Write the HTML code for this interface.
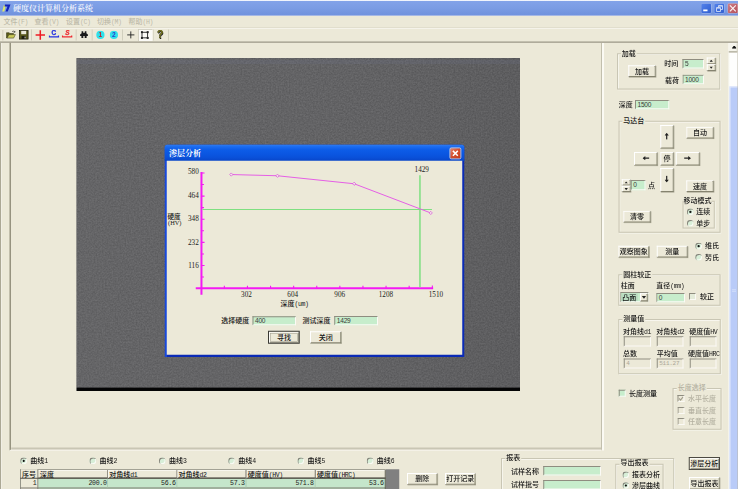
<!DOCTYPE html>
<html lang="zh-CN">
<head>
<meta charset="utf-8">
<title>硬度仪计算机分析系统</title>
<style>
*{box-sizing:border-box;margin:0;padding:0}
html,body{width:738px;height:489px;overflow:hidden;background:#ece9d8}
body{position:relative;font-family:"Liberation Sans","Noto Sans CJK SC",sans-serif;font-size:7px;line-height:8px;color:#161616;font-weight:500}
.a{position:absolute;white-space:nowrap}
.t{position:absolute;white-space:nowrap;height:8px;line-height:8px}
.btn{position:absolute;background:#ece9d8;border-top:1px solid #fff;border-left:1px solid #fff;border-right:1.2px solid #85836f;border-bottom:1.2px solid #85836f;box-shadow:0.6px 0.6px 0 #aaa794;text-align:center;white-space:nowrap;display:flex;align-items:center;justify-content:center}
.inp{position:absolute;background:#c7edcc;border-top:1px solid #8f8d80;border-left:1px solid #8f8d80;border-right:1px solid #fbfaf5;border-bottom:1px solid #fbfaf5;white-space:nowrap;padding-left:1.5px;display:flex;align-items:center;color:#3a3a3a;font-size:6.6px;letter-spacing:-0.25px}
.inp.ro{background:#ece9d8;color:#aca899}
.grp{position:absolute;border:1px solid #c9c6b4;box-shadow:0.7px 0.7px 0 #fbfaf5, inset 0.7px 0.7px 0 #fbfaf5}
.gl{position:absolute;background:#ece9d8;padding:0 1px;white-space:nowrap;height:8px;line-height:8px}
.rad{position:absolute;width:6.6px;height:6.6px;border-radius:3.3px;background:#d8efd8;box-shadow:inset 0.9px 0.9px 0 #85837a,inset -0.9px -0.9px 0 #fbfaf5}
.rad.on::after{content:"";position:absolute;left:2.2px;top:2.2px;width:2.2px;height:2.2px;border-radius:1.1px;background:#111}
.chk{position:absolute;width:7px;height:7px;background:#c7edcc;border-top:1px solid #8f8d80;border-left:1px solid #8f8d80;border-right:1px solid #fbfaf5;border-bottom:1px solid #fbfaf5}
.dis{color:#b3b0a0}
.sm{font-family:"Liberation Mono",monospace;font-size:6.5px;letter-spacing:-0.42px}
.mono{font-family:"Liberation Mono",monospace;font-size:6.6px;letter-spacing:-0.36px;color:#1c1c1c}
</style>
</head>
<body>
<div id="layer" style="position:absolute;left:0;top:0;width:738px;height:489px;overflow:hidden;filter:blur(0.35px)">
<div id="app" style="position:absolute;left:0;top:0;width:738px;height:489px;zoom:4;transform:scale(0.25);transform-origin:0 0">
<!-- title bar -->
<div class="a" id="title" style="left:0;top:0;width:738px;height:16px;background:linear-gradient(#f4f7fd 0,#eef2fb 0.8px,#82a2e8 1.4px,#7b9ce4 8px,#7395df 13px,#7193de 14.8px,#9fb3e6 15.4px,#c9d0dd 16px)"></div>
<div class="a" style="left:13px;top:3.5px;font-size:8px;line-height:9px;font-weight:600;color:#f3f6fd;font-family:'Liberation Serif','Noto Serif CJK SC',serif">硬度仪计算机分析系统</div>
<svg class="a" style="left:2px;top:4px" width="9.2" height="8" viewBox="0 0 8 8" preserveAspectRatio="none"><path d="M1.6 1.2H3.4L2 7.4H0.2Z" fill="#dfe86a"/><path d="M2.6 0.6H7.4L5 7.6H3L4.8 2.4H2.2Z" fill="#1122b8"/></svg>
<!-- window buttons -->
<div class="a" style="left:701px;top:3.2px;width:10.4px;height:10.2px;border-radius:1.5px;background:linear-gradient(135deg,#5583ea,#3f6ddc 55%,#3360cf);border:0.6px solid rgba(255,255,255,0.4)"></div>
<div class="a" style="left:703.2px;top:9.6px;width:4.2px;height:1.7px;background:#fff"></div>
<div class="a" style="left:714px;top:3.2px;width:10.4px;height:10.2px;border-radius:1.5px;background:linear-gradient(135deg,#5583ea,#3f6ddc 55%,#3360cf);border:0.6px solid rgba(255,255,255,0.4)"></div>
<div class="a" style="left:718.2px;top:5.3px;width:4.6px;height:4.4px;border:0.8px solid #eef2fc;border-top-width:1.3px"></div>
<div class="a" style="left:716.2px;top:7.3px;width:4.6px;height:4.4px;border:0.8px solid #eef2fc;border-top-width:1.3px;background:#3f6ddc"></div>
<div class="a" style="left:727.4px;top:3.2px;width:10.6px;height:10.2px;border-radius:1.5px;background:linear-gradient(135deg,#cf7f88,#c0636c 55%,#b5545e);border:0.6px solid rgba(255,255,255,0.4)"></div>
<svg class="a" style="left:727.4px;top:3.2px" width="10.6" height="10.2" viewBox="0 0 10.6 10.2"><path d="M2.4 2.2L8.3 8.1M8.3 2.2L2.4 8.1" stroke="#fbf3f4" stroke-width="1.15"/></svg>

<!-- menu -->
<div class="a" id="menu" style="left:0;top:16px;width:738px;height:12px;background:#ece9d8"></div>
<div class="t" style="left:3.5px;top:18px;color:#bdbaa9">文件<span class="sm">(F)</span></div>
<div class="t" style="left:34.5px;top:18px;color:#bdbaa9">查看<span class="sm">(V)</span></div>
<div class="t" style="left:66px;top:18px;color:#bdbaa9">设置<span class="sm">(C)</span></div>
<div class="t" style="left:97px;top:18px;color:#bdbaa9">切换<span class="sm">(M)</span></div>
<div class="t" style="left:128.5px;top:18px;color:#bdbaa9">帮助<span class="sm">(H)</span></div>

<!-- toolbar -->
<div class="a" style="left:0;top:27.5px;width:738px;height:1px;background:#d6d3c2"></div>
<div class="a" style="left:0;top:28.3px;width:738px;height:0.8px;background:#fbfaf5"></div>
<div id="toolbar">
<!-- grip -->
<div class="a" style="left:2.5px;top:30px;width:0.8px;height:10.5px;background:#c9c6b4"></div>
<!-- open folder -->
<svg class="a" style="left:6px;top:29.5px" width="10" height="10" viewBox="0 0 10 10"><path d="M0.5 8.5V3.2H3.2L4 4H7.5V5H3L1.2 8.5Z" fill="#5a5a18" stroke="#2a2a0a" stroke-width="0.5"/><path d="M1 8.6L2.9 5.1H9.4L7.6 8.6Z" fill="#c9c95a" stroke="#2a2a0a" stroke-width="0.5"/><path d="M6 2.4C7 1.2 8.3 1.4 8.8 2.6M8.9 1.4V2.8H7.6" stroke="#222" stroke-width="0.6" fill="none"/></svg>
<!-- save -->
<svg class="a" style="left:19px;top:30px" width="10" height="10" viewBox="0 0 10 10"><rect x="0.5" y="0.5" width="8.6" height="8.6" fill="#55551a" stroke="#15150a" stroke-width="0.7"/><rect x="2.2" y="0.9" width="5" height="3.3" fill="#e9e7d8"/><rect x="2.6" y="6" width="4.4" height="3" fill="#1c1c10"/><rect x="5.6" y="6.6" width="1" height="1.8" fill="#d8d6c4"/></svg>
<div class="a" style="left:31.3px;top:29.5px;width:0.8px;height:11px;background:#c9c6b4"></div>
<!-- red plus -->
<svg class="a" style="left:35px;top:29.5px" width="11" height="11" viewBox="0 0 11 11"><path d="M5.3 0.8V10.2M0.6 5.4H10" stroke="#ee1c24" stroke-width="1.5"/></svg>
<!-- C -->
<svg class="a" style="left:48.5px;top:30px" width="11" height="10" viewBox="0 0 11 10"><path d="M0.7 5.4V6.9H10V5.4" stroke="#2430e0" stroke-width="1.3" fill="none"/><text x="3.1" y="4.9" font-family="Liberation Sans,sans-serif" font-weight="bold" font-size="6.4" fill="#2430e0" stroke="#2430e0" stroke-width="0.3">C</text></svg>
<!-- S -->
<svg class="a" style="left:61.8px;top:30px" width="11" height="10" viewBox="0 0 11 10"><path d="M0.7 5.4V6.9H10V5.4" stroke="#ee2a30" stroke-width="1.3" fill="none"/><text x="3.4" y="4.9" font-family="Liberation Sans,sans-serif" font-weight="bold" font-style="italic" font-size="6.4" fill="#ee2a30" stroke="#ee2a30" stroke-width="0.3">S</text></svg>
<div class="a" style="left:75.8px;top:29.5px;width:0.8px;height:11px;background:#c9c6b4"></div>
<!-- binoculars -->
<svg class="a" style="left:80px;top:31px" width="8" height="7.4" viewBox="0 0 8 7.4"><path d="M1.6 0.3H3.2V1.8H4.8V0.3H6.4V2.2L7.9 3.6V4.9H6.6V7H4.7V4.9H3.3V7H1.4V4.9H0.1V3.6L1.6 2.2Z" fill="#1a1a1a"/></svg>
<div class="a" style="left:91.8px;top:29.5px;width:0.8px;height:11px;background:#c9c6b4"></div>
<!-- circle 1 -->
<svg class="a" style="left:96px;top:30.4px" width="9" height="9" viewBox="0 0 9 9"><circle cx="4.4" cy="4.4" r="4.1" fill="#2fe0ea"/><text x="2.6" y="6.7" font-family="Liberation Sans,sans-serif" font-weight="bold" font-size="6.6" fill="#c0232f">1</text></svg>
<!-- circle 2 -->
<svg class="a" style="left:109.6px;top:30.4px" width="9" height="9" viewBox="0 0 9 9"><circle cx="4.4" cy="4.4" r="4.1" fill="#2fe0ea"/><text x="2.5" y="6.7" font-family="Liberation Sans,sans-serif" font-weight="bold" font-size="6.6" fill="#2a3ad0">2</text></svg>
<div class="a" style="left:122.2px;top:29.5px;width:0.8px;height:11px;background:#c9c6b4"></div>
<!-- black plus -->
<svg class="a" style="left:127px;top:31px" width="8" height="8" viewBox="0 0 8 8"><path d="M3.8 0.4V7.4M0.2 3.9H7.4" stroke="#222" stroke-width="0.9"/></svg>
<!-- pressed rect-select -->
<div class="a" style="left:138.3px;top:29px;width:14.2px;height:12px;background:#fbfaf6;border-top:0.8px solid #c9c6b4;border-left:0.8px solid #c9c6b4"></div>
<svg class="a" style="left:140.4px;top:30.8px" width="9" height="9" viewBox="0 0 9 9"><rect x="1.5" y="1.5" width="5.6" height="5.6" fill="none" stroke="#222" stroke-width="0.9"/><rect x="0.4" y="0.4" width="2" height="2" fill="#222"/><rect x="6.2" y="0.4" width="2" height="2" fill="#222"/><rect x="0.4" y="6.2" width="2" height="2" fill="#222"/><rect x="6.2" y="6.2" width="2" height="2" fill="#222"/></svg>
<div class="a" style="left:153.3px;top:29.5px;width:0.8px;height:11px;background:#d3d0bf"></div>
<!-- help -->
<div class="a" style="left:157px;top:29.2px;font-size:10.5px;line-height:11px;height:11px;font-weight:bold;color:#77761c;text-shadow:0.4px 0.4px 0 #222,-0.3px 0 0 #222">?</div>
<div class="a" style="left:168px;top:29.5px;width:0.8px;height:11px;background:#c9c6b4"></div>
</div>

<div class="a" style="left:0;top:41.5px;width:738px;height:1.3px;background:#9a9786"></div>
<!-- left strips -->
<div class="a" style="left:0;top:43px;width:1.3px;height:446px;background:#aba895"></div>
<div class="a" style="left:1.3px;top:43px;width:0.8px;height:446px;background:#f8f7ef"></div>

<!-- main panel -->
<div class="a" id="mainpanel" style="left:9.6px;top:42.8px;width:591.4px;height:407.6px;border-left:1.7px solid #96937f;border-bottom:1px solid #fbfaf5"></div>
<div class="a" style="left:11.3px;top:447.5px;width:590.8px;height:1.9px;background:#c9c6b4"></div>
<div class="a" style="left:600.9px;top:43px;width:1.2px;height:406.4px;background:#c2bfad"></div>
<div class="a" style="left:602.1px;top:43px;width:1.9px;height:407.4px;background:#fbfaf3"></div>

<div id="image">
<svg class="a" style="left:76.5px;top:58px" width="443.5" height="333" viewBox="0 0 443.5 333">
<defs>
<filter id="nz" x="0" y="0" width="100%" height="100%" color-interpolation-filters="sRGB"><feTurbulence type="fractalNoise" baseFrequency="0.62" numOctaves="2" seed="11"/><feColorMatrix type="matrix" values="0.12 0 0 0 0.318  0.12 0 0 0 0.318  0.12 0 0 0 0.326  0 0 0 0 1"/></filter>
<linearGradient id="ig" x1="0" x2="1" y1="0" y2="0"><stop offset="0" stop-color="#fff" stop-opacity="0.03"/><stop offset="0.45" stop-color="#fff" stop-opacity="0.02"/><stop offset="1" stop-color="#000" stop-opacity="0.04"/></linearGradient>
</defs>
<rect width="443.5" height="333" fill="#626264"/>
<rect width="443.5" height="333" fill="#626264" filter="url(#nz)"/>
<rect width="443.5" height="333" fill="url(#ig)"/>
<rect y="2" width="443.5" height="4" fill="#70758a" opacity="0.2"/>
<rect y="329.6" width="443.5" height="3.4" fill="#050505"/>
</svg>
</div>
<div id="dialog">
<!-- frame -->
<div class="a" style="left:164.7px;top:144.7px;width:299.6px;height:212.3px;background:linear-gradient(90deg,#1848da 0,#1848da 2.2px,#0b2bb6 2.3px,#0b2bb6 100%);border-radius:2.5px 2.5px 0 0"></div>
<div class="a" style="left:164.7px;top:144.7px;width:299.6px;height:16.3px;border-radius:2.5px 2.5px 0 0;background:linear-gradient(#2f7cf0 0,#1a6bf0 2px,#0d5de8 5px,#0a55e0 10px,#0a50d8 13px,#0844c8 16.3px)"></div>
<div class="a" style="left:166.8px;top:160.8px;width:295.5px;height:194px;background:#ece9d8"></div>
<div class="a" style="left:169px;top:149px;font-size:8px;line-height:9px;font-weight:bold;color:#fff;font-family:'Liberation Serif','Noto Serif CJK SC',serif">渗层分析</div>
<!-- close -->
<div class="a" style="left:449.6px;top:147.5px;width:11.7px;height:11.7px;border-radius:1.8px;background:linear-gradient(135deg,#e68a72,#d6502f 45%,#c23c1c);border:0.8px solid #f2e3dc"></div>
<svg class="a" style="left:449.6px;top:147.5px" width="11.7" height="11.7" viewBox="0 0 11.7 11.7"><path d="M3.4 3.4L8.3 8.3M8.3 3.4L3.4 8.3" stroke="#fff" stroke-width="1.5"/></svg>
<!-- chart -->
<svg class="a" style="left:166.8px;top:160.8px" width="295.5" height="194" viewBox="166.8 160.8 295.5 194">
<g stroke="#f41af4" fill="none">
<path d="M201.5 172V294.8" stroke-width="2"/>
<path d="M195.8 288.3H433.2" stroke-width="2"/>
<path d="M201 173H204.6M201 184.5H204M201 196.2H204.6M201 207.7H204M201 219.3H204.6M201 230.8H204M201 242.4H204.6M201 254H204M201 265.5H204.6M201 277.1H204" stroke-width="1.1"/>
<path d="M224.4 289V285.8M247.5 289V285.8M270.6 289V285.8M293.7 289V285.8M316.8 289V285.8M339.9 289V285.8M363 289V285.8M386.1 289V285.8M409.2 289V285.8M432.4 289V285.5" stroke-width="1.1"/>
</g>
<path d="M202.5 209.5H432" stroke="#7fe081" stroke-width="1.1" fill="none"/>
<path d="M420 175.3V287.4" stroke="#7fe081" stroke-width="1.5" fill="none"/>
<path d="M231.3 174.6L277.5 175.8L354.2 183.8L430.8 213" stroke="#e55fe5" stroke-width="1" fill="none"/>
<g fill="#f3e6ea" stroke="#d94fd9" stroke-width="0.7">
<path d="M229.7 174.6l1.6-1.6 1.6 1.6-1.6 1.6z"/><path d="M275.9 175.8l1.6-1.6 1.6 1.6-1.6 1.6z"/><path d="M352.6 183.8l1.6-1.6 1.6 1.6-1.6 1.6z"/><path d="M429.2 213l1.6-1.6 1.6 1.6-1.6 1.6z"/>
</g>
<g font-family="Liberation Serif,serif" font-size="7.2" fill="#222" text-anchor="end">
<text x="198.8" y="174">580</text><text x="198.8" y="197.9">464</text><text x="198.8" y="220.7">348</text><text x="198.8" y="244.8">232</text><text x="198.8" y="268">116</text>
</g>
<g font-family="Liberation Serif,serif" font-size="7.2" fill="#222" text-anchor="middle">
<text x="246.5" y="297.2">302</text><text x="292.8" y="297.2">604</text><text x="339.8" y="297.2">906</text><text x="386" y="297.2">1208</text><text x="436" y="297.2">1510</text><text x="421.8" y="172.2">1429</text>
</g>
</svg>
<div class="t" style="left:167.5px;top:212.5px;font-size:6.6px">硬度</div>
<div class="t" style="left:168px;top:219.2px;font-size:6.4px;font-family:'Liberation Serif',serif">(HV)</div>
<div class="t" style="left:280.5px;top:299.5px">深度<span class="sm">(um)</span></div>
<div class="t" style="left:221.3px;top:317px">选择硬度</div>
<div class="inp" style="left:252.5px;top:316.2px;width:43.5px;height:9px">400</div>
<div class="t" style="left:302.5px;top:317px">测试深度</div>
<div class="inp" style="left:334.3px;top:316px;width:43.8px;height:9.2px">1429</div>
<div class="btn" style="left:268px;top:330.8px;width:31.8px;height:13px;border:1px solid #3a3a34;box-shadow:inset 0.8px 0.8px 0 #fff,inset -0.8px -0.8px 0 #8a8878">寻找</div>
<div class="a" style="left:270.3px;top:333px;width:27.2px;height:8.6px;border:0.5px solid #9a9888"></div>
<div class="btn" style="left:310px;top:331.3px;width:31.3px;height:12px">关闭</div>
</div>
<div id="right">
<!-- scrollbar -->
<div class="a" style="left:727.5px;top:43px;width:10.5px;height:446px;background:linear-gradient(90deg,#ece9d8 0,#fbfbf6 1.8px,#fefefd 3px)"></div>
<div class="a" style="left:728.8px;top:43.2px;width:8.5px;height:9.4px;background:#f5f4ec;border-bottom:1.3px solid #a9a694;border-right:0.5px solid #c9c6b4"></div>
<svg class="a" style="left:732px;top:45.8px" width="4.4" height="3" viewBox="0 0 4.4 3"><path d="M0 3L0.6 1.6L1.6 0.3H2.8L3.8 1.6L4.4 3Z" fill="#111"/></svg>
<div class="a" style="left:729.6px;top:86.4px;width:8.4px;height:403px;background:#b9cbf8;border-left:1px solid #e3eafc;border-top:1px solid #e3eafc"></div>
<div class="a" style="left:732px;top:289.6px;width:4px;height:0.7px;background:#dfe8fc"></div><div class="a" style="left:732px;top:291.4px;width:4px;height:0.7px;background:#dfe8fc"></div>
<div class="a" style="left:737.3px;top:43px;width:0.7px;height:446px;background:#b9b6a4;opacity:0.6"></div>

<!-- 加载 group -->
<div class="grp" style="left:617px;top:53.3px;width:103.3px;height:36.2px"></div>
<div class="gl" style="left:620.8px;top:49.2px">加载</div>
<div class="btn" style="left:628.3px;top:65.3px;width:27.5px;height:11.8px">加载</div>
<div class="t" style="left:664.2px;top:60px">时间</div>
<div class="inp" style="left:682.5px;top:59px;width:21.6px;height:9.4px">5</div>
<div class="btn" style="left:706.8px;top:57.6px;width:9px;height:6.6px"></div>
<div class="btn" style="left:706.8px;top:64.3px;width:9px;height:6.6px"></div>
<svg class="a" style="left:709.6px;top:59.6px" width="3.4" height="2.4" viewBox="0 0 3.4 2.4"><path d="M0 2.3L1.7 0.2L3.4 2.3Z" fill="#222"/></svg>
<svg class="a" style="left:709.6px;top:66.6px" width="3.4" height="2.4" viewBox="0 0 3.4 2.4"><path d="M0 0.1L1.7 2.2L3.4 0.1Z" fill="#222"/></svg>
<div class="t" style="left:665px;top:76.5px">载荷</div>
<div class="inp" style="left:682.5px;top:74.7px;width:21.6px;height:9.5px">1000</div>

<div class="t" style="left:618.8px;top:101px">深度</div>
<div class="inp" style="left:635px;top:100px;width:34.2px;height:9.2px">1500</div>

<!-- 马达台 group -->
<div class="grp" style="left:618.5px;top:120.8px;width:102px;height:112px"></div>
<div class="gl" style="left:622.3px;top:116.8px">马达台</div>
<div class="btn" style="left:660.3px;top:125px;width:13.5px;height:23.4px"></div>
<svg class="a" style="left:664.6px;top:132.8px" width="4.4" height="7" viewBox="0 0 4.4 7"><path d="M2.2 0L4.3 2.8H2.8V6.8H1.6V2.8H0.1Z" fill="#222"/></svg>
<div class="btn" style="left:686.3px;top:126.7px;width:27.5px;height:11.7px">自动</div>
<div class="btn" style="left:634px;top:152px;width:23.6px;height:13.4px"></div>
<svg class="a" style="left:642.4px;top:155.9px" width="7" height="4.4" viewBox="0 0 7 4.4"><path d="M0 2.2L2.8 0.1V1.6H6.8V2.8H2.8V4.3Z" fill="#222"/></svg>
<div class="btn" style="left:660.3px;top:152px;width:13.5px;height:13.4px">停</div>
<div class="btn" style="left:675.8px;top:152px;width:24px;height:13.4px"></div>
<svg class="a" style="left:684px;top:155.9px" width="7" height="4.4" viewBox="0 0 7 4.4"><path d="M7 2.2L4.2 0.1V1.6H0.2V2.8H4.2V4.3Z" fill="#222"/></svg>
<div class="btn" style="left:660.3px;top:168px;width:13.5px;height:24px"></div>
<svg class="a" style="left:664.6px;top:175.6px" width="4.4" height="7" viewBox="0 0 4.4 7"><path d="M2.2 7L4.3 4.2H2.8V0.2H1.6V4.2H0.1Z" fill="#222"/></svg>
<div class="btn" style="left:686.3px;top:180.3px;width:27.5px;height:11.7px">速度</div>
<div class="btn" style="left:621.7px;top:179.2px;width:9px;height:6.4px"></div>
<div class="btn" style="left:621.7px;top:185.7px;width:9px;height:6.4px"></div>
<svg class="a" style="left:624.5px;top:181.2px" width="3.4" height="2.4" viewBox="0 0 3.4 2.4"><path d="M0 2.3L1.7 0.2L3.4 2.3Z" fill="#222"/></svg>
<svg class="a" style="left:624.5px;top:188px" width="3.4" height="2.4" viewBox="0 0 3.4 2.4"><path d="M0 0.1L1.7 2.2L3.4 0.1Z" fill="#222"/></svg>
<div class="inp" style="left:630.8px;top:180px;width:14.6px;height:10.2px">0</div>
<div class="t" style="left:648px;top:181.5px">点</div>
<div class="btn" style="left:623.3px;top:210.8px;width:27.5px;height:11.8px">清零</div>
<div class="grp" style="left:682.5px;top:200.8px;width:32.3px;height:27.6px"></div>
<div class="gl" style="left:683.5px;top:196.8px;padding:0">移动模式</div>
<div class="rad on" style="left:687px;top:208.6px"></div>
<div class="t" style="left:696.3px;top:208px">连续</div>
<div class="rad" style="left:687px;top:219.9px"></div>
<div class="t" style="left:696.3px;top:219.3px">单步</div>

<div class="btn" style="left:618.3px;top:245.8px;width:31px;height:11.8px">观察图象</div>
<div class="btn" style="left:656.7px;top:245.8px;width:31px;height:11.8px">测量</div>
<div class="rad on" style="left:695.3px;top:242.8px"></div>
<div class="t" style="left:705px;top:242px">维氏</div>
<div class="rad" style="left:695.3px;top:254px"></div>
<div class="t" style="left:705px;top:253.2px">努氏</div>

<!-- 圆柱较正 -->
<div class="grp" style="left:618.3px;top:274.2px;width:102.2px;height:31.5px"></div>
<div class="gl" style="left:622.3px;top:270.2px">圆柱较正</div>
<div class="t" style="left:620.8px;top:282px">柱面</div>
<div class="t" style="left:656.3px;top:282px">直径<span class="sm">(mm)</span></div>
<div class="inp" style="left:620.3px;top:292px;width:28.5px;height:10.2px;background:#c7edcc"></div>
<div class="a" style="left:621.8px;top:293.5px;width:16px;height:7.4px;background:#b9dcc0"></div>
<div class="t" style="left:622.3px;top:293.3px">凸面</div>
<div class="btn" style="left:640px;top:293.2px;width:7.8px;height:8px"></div>
<svg class="a" style="left:641.8px;top:296px" width="4.4" height="2.9" viewBox="0 0 3.6 2.4"><path d="M0 0.1L1.8 2.2L3.6 0.1Z" fill="#222"/></svg>
<div class="inp" style="left:656.3px;top:293px;width:28.8px;height:9.2px">0</div>
<div class="chk" style="left:689px;top:293px;background:#e4ebd9"></div>
<div class="t" style="left:700px;top:293px">较正</div>

<!-- 测量值 -->
<div class="grp" style="left:618.3px;top:319px;width:102.5px;height:55.2px"></div>
<div class="gl" style="left:622.3px;top:315px">测量值</div>
<div class="t" style="left:623px;top:327.4px">对角线<span class="sm">d1</span></div>
<div class="t" style="left:656.3px;top:327.4px">对角线<span class="sm">d2</span></div>
<div class="t" style="left:689.2px;top:327.4px">硬度值<span class="sm">HV</span></div>
<div class="inp ro" style="left:623.7px;top:336.3px;width:27.2px;height:10.2px"></div>
<div class="inp ro" style="left:656.7px;top:336.3px;width:26.8px;height:10.2px"></div>
<div class="inp ro" style="left:689.7px;top:336.3px;width:26.8px;height:10.2px"></div>
<div class="t" style="left:623px;top:349.5px">总数</div>
<div class="t" style="left:656.7px;top:349.5px">平均值</div>
<div class="t" style="left:688px;top:349.5px">硬度值<span class="sm">HRC</span></div>
<div class="inp ro" style="left:623.7px;top:358.6px;width:27.2px;height:9.8px;font-family:'Liberation Mono',monospace;font-size:6px">4</div>
<div class="inp ro" style="left:656.7px;top:358.6px;width:26.8px;height:9.8px;font-family:'Liberation Mono',monospace;font-size:6px">511.27</div>
<div class="inp ro" style="left:689.7px;top:358.6px;width:26.8px;height:9.8px"></div>

<div class="chk" style="left:618.7px;top:389.7px"></div>
<div class="t" style="left:629px;top:389.2px">长度测量</div>
<div class="grp" style="left:672.5px;top:388px;width:49px;height:41.8px"></div>
<div class="gl dis" style="left:676.8px;top:384px">长度选择</div>
<div class="chk" style="left:677.5px;top:395px;background:#ece9d8"></div>
<svg class="a" style="left:678.6px;top:396.2px" width="5" height="5" viewBox="0 0 5 5"><path d="M0.6 2.2L2 3.8L4.6 0.6" stroke="#a09d8c" stroke-width="1.1" fill="none"/></svg>
<div class="t dis" style="left:688px;top:394.5px">水平长度</div>
<div class="chk" style="left:677.5px;top:407px;background:#ece9d8"></div>
<div class="t dis" style="left:688px;top:406.5px">垂直长度</div>
<div class="chk" style="left:677.5px;top:418px;background:#ece9d8"></div>
<div class="t dis" style="left:688px;top:417.6px">任意长度</div>

<div class="btn" style="left:688.7px;top:457px;width:31.3px;height:13px;border:1px solid #4c4a42;box-shadow:inset 0.8px 0.8px 0 #fff,inset -0.8px -0.8px 0 #8a8878">渗层分析</div>
<div class="btn" style="left:689px;top:477px;width:30.8px;height:12.5px">导出报表</div>
</div>
<div id="bottom">
<div class="rad on" style="left:20.3px;top:457.6px"></div><div class="t" style="left:30.3px;top:457px">曲线<span class="sm">1</span></div>
<div class="rad" style="left:89.6px;top:457.6px"></div><div class="t" style="left:99.6px;top:457px">曲线<span class="sm">2</span></div>
<div class="rad" style="left:158.9px;top:457.6px"></div><div class="t" style="left:168.9px;top:457px">曲线<span class="sm">3</span></div>
<div class="rad" style="left:228.2px;top:457.6px"></div><div class="t" style="left:238.2px;top:457px">曲线<span class="sm">4</span></div>
<div class="rad" style="left:297.5px;top:457.6px"></div><div class="t" style="left:307.5px;top:457px">曲线<span class="sm">5</span></div>
<div class="rad" style="left:366.8px;top:457.6px"></div><div class="t" style="left:376.8px;top:457px">曲线<span class="sm">6</span></div>
<!-- table -->
<div class="a" style="left:20.3px;top:469.3px;width:379px;height:20px;background:#808080"></div>
<div class="a" style="left:20.3px;top:469.3px;width:365.4px;height:20px;background:#c5e6cb"></div>
<div class="a" style="left:20.3px;top:469.3px;width:365.4px;height:9.2px;background:#ece9d8;border-top:0.8px solid #8f8d80;border-bottom:1px solid #5d5b50;box-shadow:inset 0 0.8px 0 #fbfaf5"></div>
<div class="a" style="left:20.3px;top:469.3px;width:18px;height:20px;background:#ece9d8;border-left:0.8px solid #7d7b70;border-right:0.8px solid #6a685c"></div>
<div class="a" style="left:20.3px;top:477.7px;width:365.4px;height:1px;background:#4f4d44"></div>
<div class="a" style="left:20.3px;top:487.6px;width:365.4px;height:0.9px;background:#7d7b70"></div>
<div class="a" style="left:107.2px;top:470px;width:0.9px;height:8px;background:#77756a;box-shadow:0.8px 0 0 #fbfaf5"></div>
<div class="a" style="left:176.4px;top:470px;width:0.9px;height:8px;background:#77756a;box-shadow:0.8px 0 0 #fbfaf5"></div>
<div class="a" style="left:245.6px;top:470px;width:0.9px;height:8px;background:#77756a;box-shadow:0.8px 0 0 #fbfaf5"></div>
<div class="a" style="left:314.8px;top:470px;width:0.9px;height:8px;background:#77756a;box-shadow:0.8px 0 0 #fbfaf5"></div>
<div class="a" style="left:384.8px;top:470px;width:1px;height:19px;background:#5d5b50"></div>
<div class="a" style="left:107.2px;top:478.6px;width:0.8px;height:9px;background:#a9c8b0"></div>
<div class="a" style="left:176.4px;top:478.6px;width:0.8px;height:9px;background:#a9c8b0"></div>
<div class="a" style="left:245.6px;top:478.6px;width:0.8px;height:9px;background:#a9c8b0"></div>
<div class="a" style="left:314.8px;top:478.6px;width:0.8px;height:9px;background:#a9c8b0"></div>
<div class="t" style="left:22px;top:470.3px">序号</div>
<div class="t" style="left:40px;top:470.3px">深度</div>
<div class="t" style="left:109.3px;top:470.3px">对角线<span class="sm">d1</span></div>
<div class="t" style="left:178.5px;top:470.3px">对角线<span class="sm">d2</span></div>
<div class="t" style="left:247.7px;top:470.3px">硬度值<span class="sm">(HV)</span></div>
<div class="t" style="left:316.9px;top:470.3px">硬度值<span class="sm">(HRC)</span></div>
<div class="t mono" style="left:20.3px;top:479.6px;width:16px;text-align:right">1</div>
<div class="t mono" style="left:38px;top:479.6px;width:68.5px;text-align:right">200.0</div>
<div class="t mono" style="left:107px;top:479.6px;width:68.5px;text-align:right">56.6</div>
<div class="t mono" style="left:176px;top:479.6px;width:68.5px;text-align:right">57.3</div>
<div class="t mono" style="left:245px;top:479.6px;width:68.5px;text-align:right">571.8</div>
<div class="t mono" style="left:315px;top:479.6px;width:68.5px;text-align:right">53.6</div>

<div class="btn" style="left:407px;top:473px;width:30.6px;height:11.8px">删除</div>
<div class="btn" style="left:445px;top:473px;width:30.4px;height:11.8px">打开记录</div>

<!-- 报表 group -->
<div class="grp" style="left:501px;top:458px;width:173.2px;height:40px"></div>
<div class="gl" style="left:505.3px;top:454px">报表</div>
<div class="t" style="left:511px;top:467.3px">试样名称</div>
<div class="inp" style="left:543.3px;top:466px;width:57.8px;height:9.6px"></div>
<div class="t" style="left:511px;top:480.8px">试样批号</div>
<div class="inp" style="left:543.3px;top:480px;width:57.8px;height:9.6px"></div>
<!-- 导出报表 group -->
<div class="grp" style="left:615.2px;top:463.8px;width:48.3px;height:40px"></div>
<div class="gl" style="left:619.5px;top:458.8px">导出报表</div>
<div class="rad" style="left:622.5px;top:471.6px"></div><div class="t" style="left:632px;top:471px">报表分析</div>
<div class="rad on" style="left:622.5px;top:482.2px"></div><div class="t" style="left:632px;top:481.6px">渗层曲线</div>
</div>
</div>
</div>
</body>
</html>
